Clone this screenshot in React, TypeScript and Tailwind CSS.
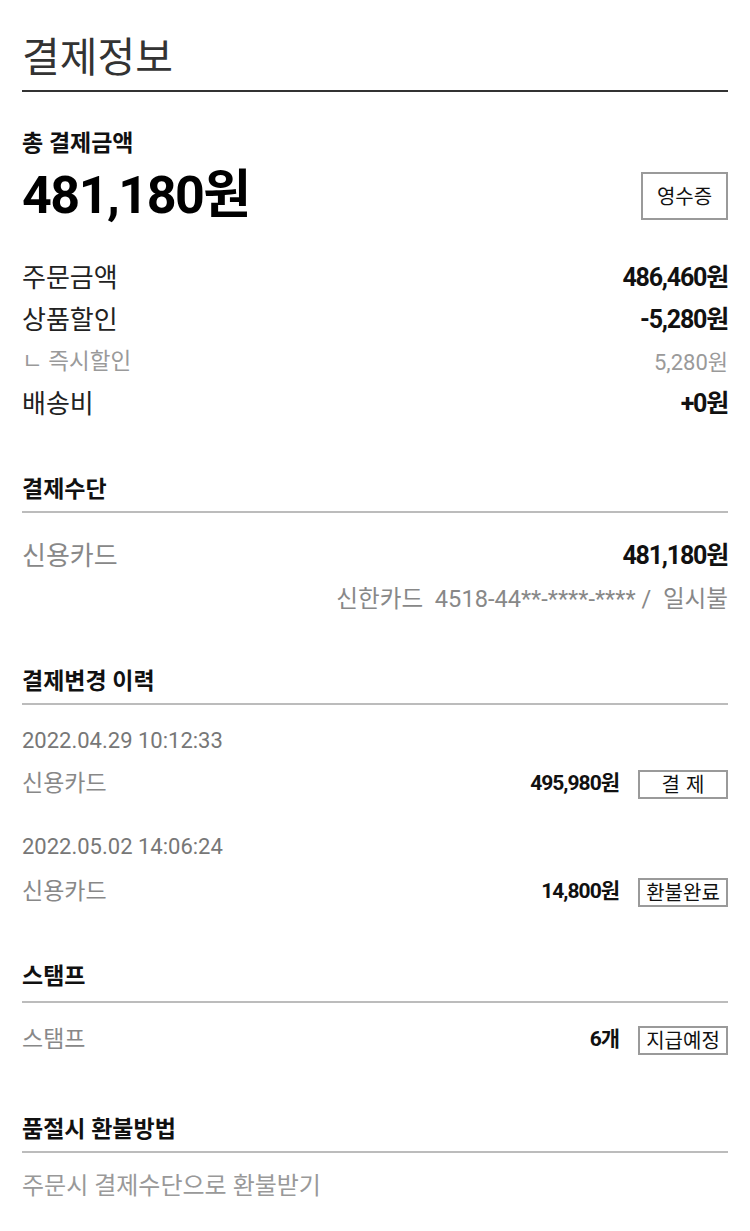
import React from "react";

const F = "font-['Roboto','Noto_Sans_CJK_KR',sans-serif]";

function SmallBtn({ children }: { children: React.ReactNode }) {
  return (
    <span className="ml-[19px] flex h-[29px] w-[90px] items-center justify-center border-2 border-[#9a9a9a] bg-white text-[20px] leading-none text-[#111] font-['Noto_Sans_CJK_KR',sans-serif]">
      {children}
    </span>
  );
}

function Header({ children, className = "" }: { children: React.ReactNode; className?: string }) {
  return (
    <div className={`border-b-2 border-[#bcbcbc] pb-[9px] text-[23px] leading-[24px] font-bold text-[#111] ${className}`}>
      {children}
    </div>
  );
}

export default function App() {
  return (
    <div className={`min-h-[1231px] bg-white px-[22px] pt-[30px] pb-[31px] ${F}`}>
      <div className="border-b-2 border-[#333] pb-[12px] text-[41px] leading-[48px] font-normal text-[#333] font-['Noto_Sans_CJK_KR',sans-serif]">
        결제정보
      </div>

      <div className="mt-[40px] text-[23px] leading-[24px] font-bold text-[#111]">총 결제금액</div>
      <div className="mt-[12px] flex h-[56px] items-center justify-between">
        <span className="text-[52px] leading-[56px] font-bold tracking-[-1.5px] text-black">481,180원</span>
        <span className="flex h-[48px] w-[87px] items-center justify-center border-2 border-[#9a9a9a] text-[20px] text-[#111] font-['Noto_Sans_CJK_KR',sans-serif]">
          영수증
        </span>
      </div>

      <div className="mt-[33px]">
        <div className="flex h-[42px] items-center justify-between">
          <span className="text-[26px] text-[#222]">주문금액</span>
          <span className="text-[25px] font-bold tracking-[-1.2px] text-[#111]">486,460원</span>
        </div>
        <div className="flex h-[42px] items-center justify-between">
          <span className="text-[26px] text-[#222]">상품할인</span>
          <span className="text-[25px] font-bold tracking-[-1.2px] text-[#111]">-5,280원</span>
        </div>
        <div className="flex h-[42px] items-center justify-between">
          <span className="text-[22.5px] text-[#9a9a9a]">ㄴ 즉시할인</span>
          <span className="text-[22px] text-[#9a9a9a]">5,280원</span>
        </div>
        <div className="flex h-[42px] items-center justify-between">
          <span className="text-[26px] text-[#222]">배송비</span>
          <span className="text-[25px] font-bold tracking-[-1.2px] text-[#111]">+0원</span>
        </div>
      </div>

      <Header className="mt-[53px]">결제수단</Header>
      <div className="mt-[27px] flex h-[32px] items-center justify-between">
        <span className="text-[26px] text-[#888]">신용카드</span>
        <span className="text-[25px] font-bold tracking-[-1.2px] text-[#111]">481,180원</span>
      </div>
      <div className="mt-[14px] flex h-[28px] items-center justify-end text-[23.6px] text-[#888] whitespace-pre">
        {"신한카드  4518-44**-****-**** /  일시불"}
      </div>

      <Header className="mt-[56px]">결제변경 이력</Header>
      <div className="mt-[24px] h-[24px] text-[22px] leading-[24px] text-[#777]">2022.04.29 10:12:33</div>
      <div className="mt-[16px] flex h-[30px] items-center justify-between">
        <span className="text-[23px] text-[#888]">신용카드</span>
        <span className="flex items-center">
          <span className="text-[21px] font-bold tracking-[-1px] text-[#111]">495,980원</span>
          <SmallBtn>
            <span className="tracking-[6px] pl-[6px]">결제</span>
          </SmallBtn>
        </span>
      </div>
      <div className="mt-[36px] h-[24px] text-[22px] leading-[24px] text-[#777]">2022.05.02 14:06:24</div>
      <div className="mt-[18px] flex h-[30px] items-center justify-between">
        <span className="text-[23px] text-[#888]">신용카드</span>
        <span className="flex items-center">
          <span className="text-[21px] font-bold tracking-[-1px] text-[#111]">14,800원</span>
          <SmallBtn>환불완료</SmallBtn>
        </span>
      </div>

      <Header className="mt-[58px] pb-[12px]">스탬프</Header>
      <div className="mt-[21px] flex h-[32px] items-center justify-between">
        <span className="text-[23px] text-[#888]">스탬프</span>
        <span className="flex items-center">
          <span className="text-[21px] font-bold tracking-[-1px] text-[#111]">6개</span>
          <SmallBtn>지급예정</SmallBtn>
        </span>
      </div>

      <Header className="mt-[62px]">품절시 환불방법</Header>
      <div className="mt-[19px] h-[28px] text-[24px] leading-[28px] text-[#999]">주문시 결제수단으로 환불받기</div>
    </div>
  );
}
